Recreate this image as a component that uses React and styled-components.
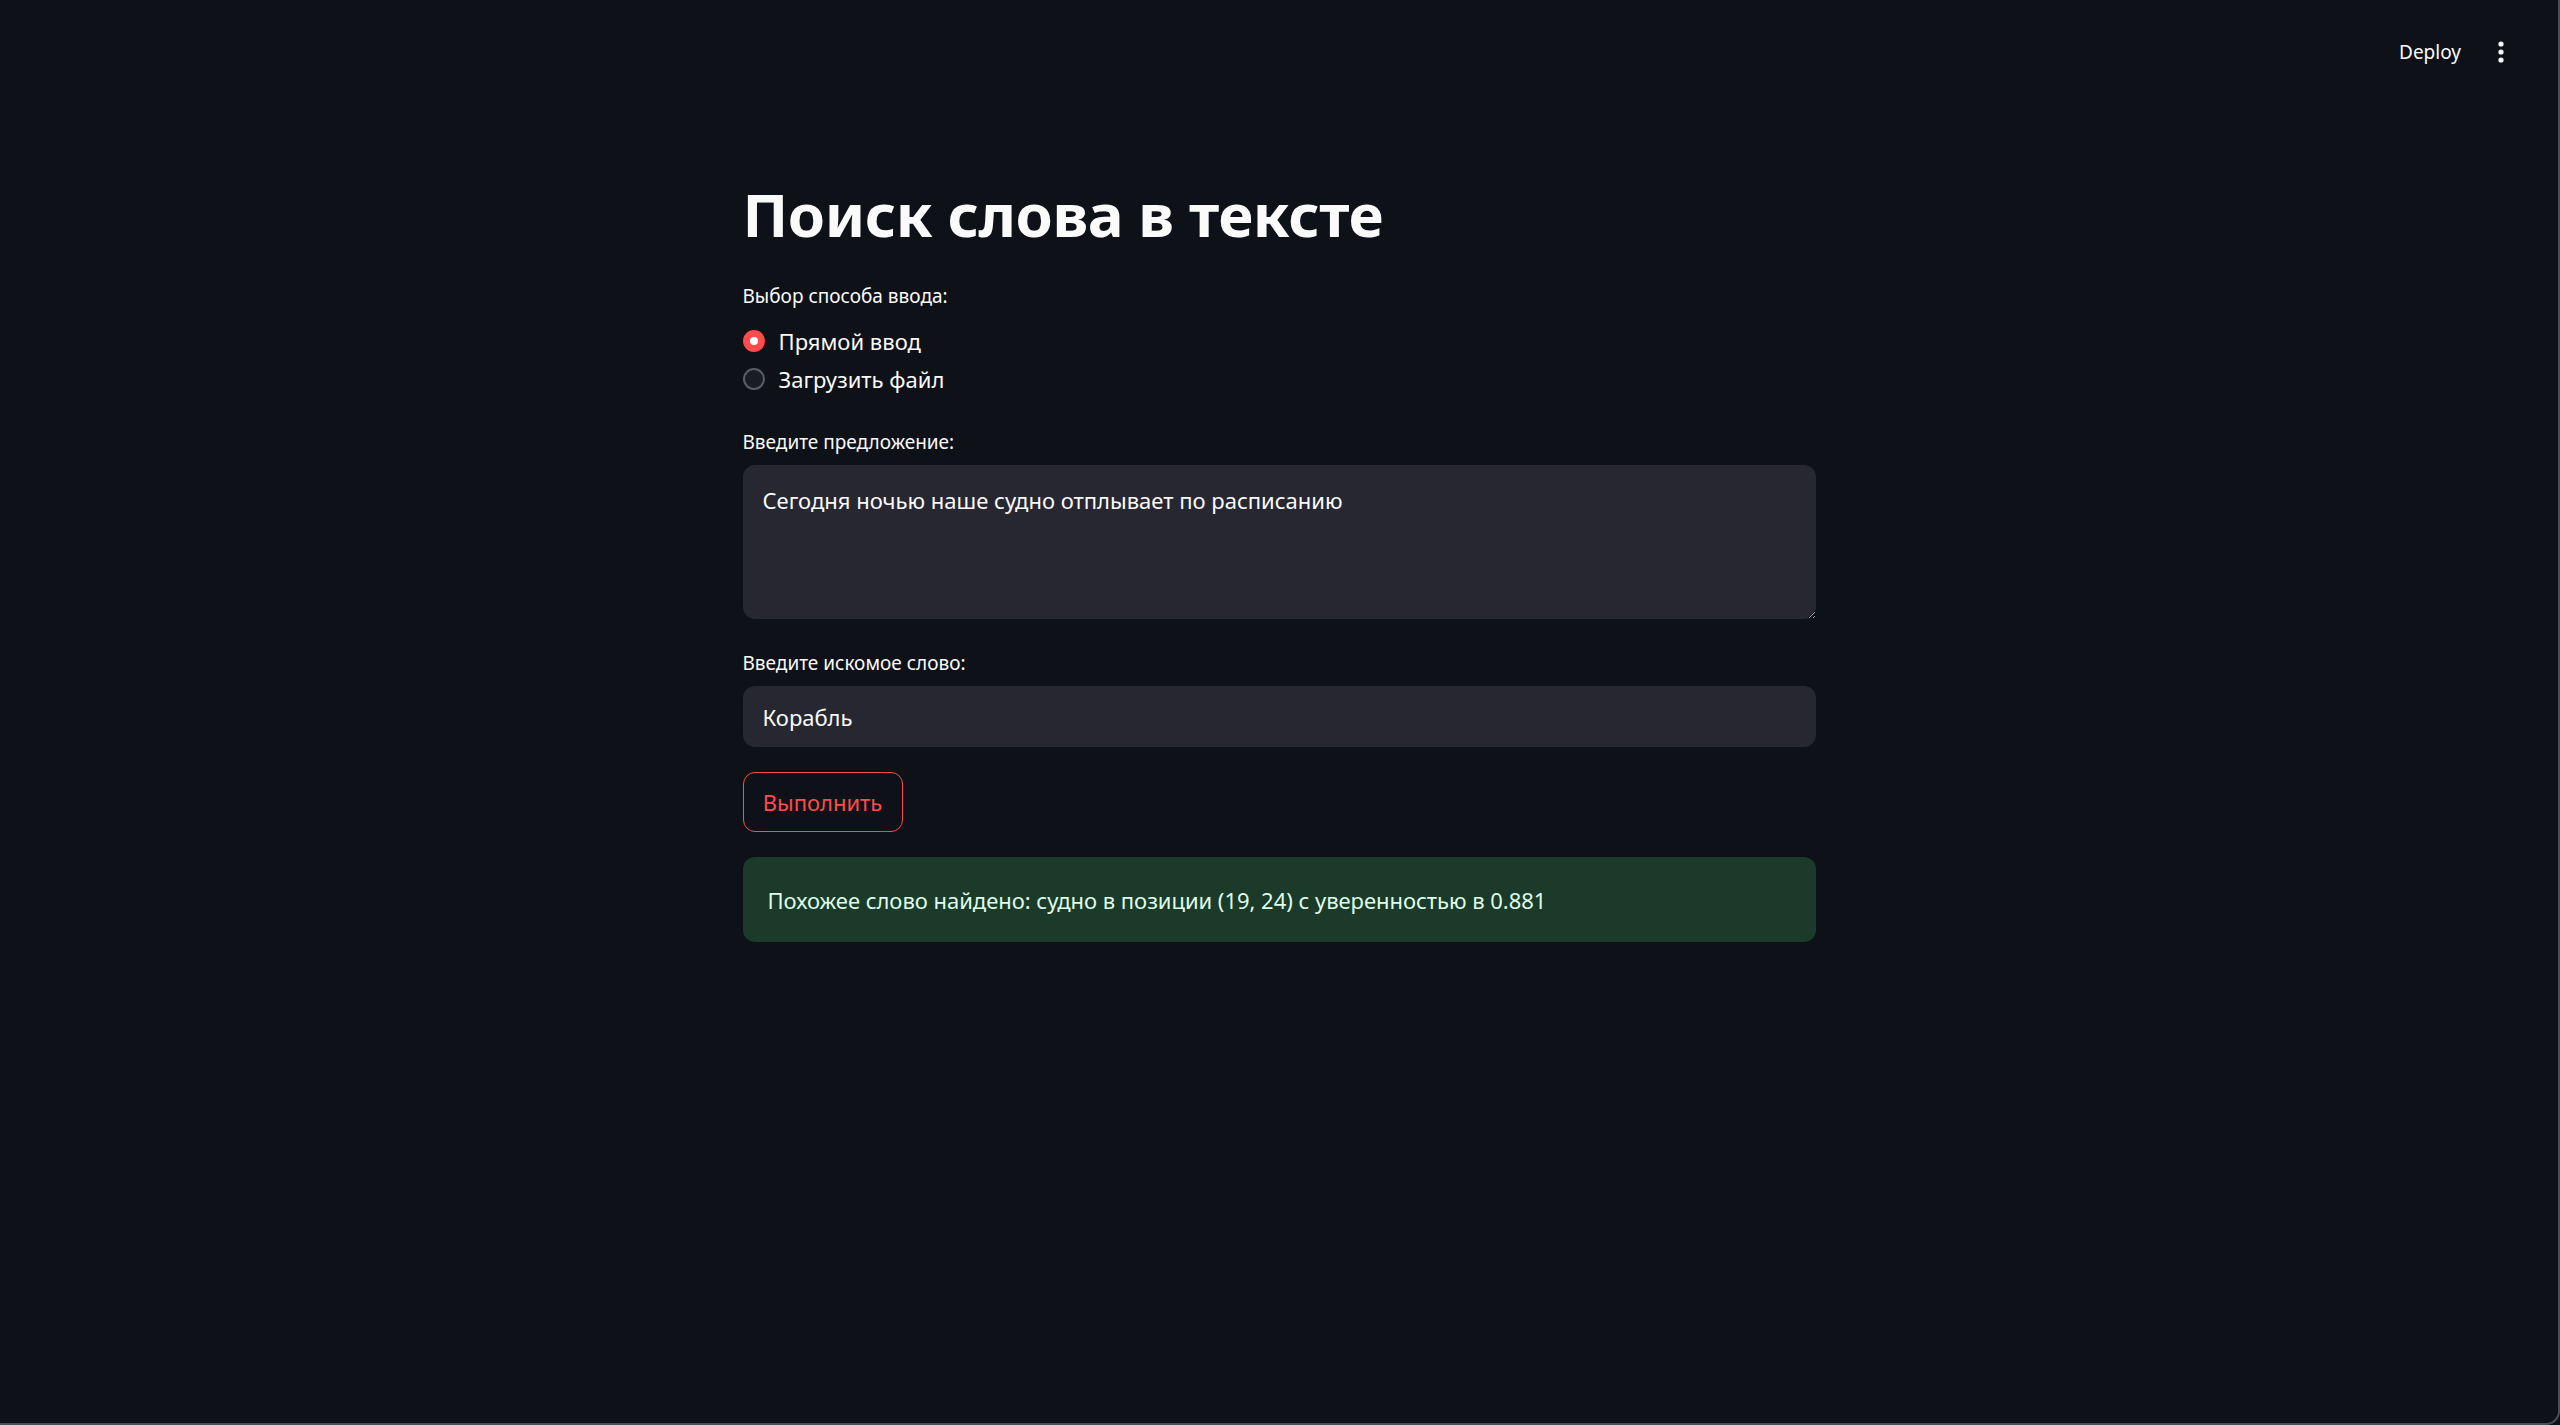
import React from 'react';
import styled, { createGlobalStyle } from 'styled-components';

const colors = {
  bg: '#0e1117',
  text: '#fafafa',
  field: '#262730',
  primary: '#ff4b4b',
  successBg: '#1b3a2a',
  successText: '#dffde9',
  frame: '#4a4d55',
};

const GlobalStyle = createGlobalStyle`
  * { box-sizing: border-box; }
  html, body {
    margin: 0;
    padding: 0;
    background: ${colors.bg};
    color: ${colors.text};
    font-family: "Noto Sans", "Open Sans", sans-serif;
    color-scheme: dark;
  }
`;

const AppFrame = styled.div`
  min-height: 100vh;
  height: 1425px;
  background: ${colors.bg};
  border-right: 2px solid ${colors.frame};
  border-bottom: 2px solid ${colors.frame};
  border-bottom-right-radius: 14px;
  display: flex;
  flex-direction: column;
  overflow: hidden;
`;

const Header = styled.header`
  height: 90px;
  flex-shrink: 0;
  display: flex;
  justify-content: flex-end;
  align-items: flex-start;
  padding: 40px 35px 0 0;
  gap: 28px;
`;

const DeployButton = styled.div`
  font-size: 19px;
  line-height: 40px;
  margin-top: -8px;
  color: ${colors.text};
  cursor: pointer;
`;

const Kebab = styled.div`
  width: 24px;
  height: 24px;
  display: flex;
  align-items: center;
  justify-content: center;
  margin-right: 10px;
`;

const Main = styled.main`
  width: 1073px;
  margin: 0 auto;
  padding-top: 88px;
  display: flex;
  flex-direction: column;
`;

const Title = styled.h1`
  margin: 0;
  font-size: 60px;
  font-weight: 700;
  line-height: 72px;
  letter-spacing: -0.4px;
  color: ${colors.text};
`;

const Label = styled.div`
  font-size: 19px;
  line-height: 28px;
  color: ${colors.text};
  margin-top: ${(p) => p.$top || 30}px;
  margin-bottom: ${(p) => p.$bottom || 9}px;
`;

const RadioGroup = styled.div`
  display: flex;
  flex-direction: column;
`;

const RadioRow = styled.label`
  height: 38px;
  display: flex;
  align-items: center;
  gap: 14px;
  font-size: 22px;
  cursor: pointer;
`;

const RadioDot = styled.span`
  width: 22px;
  height: 22px;
  border-radius: 50%;
  flex-shrink: 0;
  display: flex;
  align-items: center;
  justify-content: center;
  background: ${(p) => (p.$checked ? colors.primary : '#1a1c23')};
  border: ${(p) => (p.$checked ? 'none' : '2px solid #5a5d65')};
  &::after {
    content: '';
    display: ${(p) => (p.$checked ? 'block' : 'none')};
    width: 8px;
    height: 8px;
    border-radius: 50%;
    background: #fff;
  }
`;

const TextArea = styled.textarea`
  width: 100%;
  height: 154px;
  border: none;
  outline: none;
  border-radius: 12px;
  background: ${colors.field};
  color: ${colors.text};
  font-family: inherit;
  font-size: 22px;
  line-height: 35px;
  padding: 18px 20px;
  resize: vertical;
  display: block;
`;

const TextInput = styled.input`
  width: 100%;
  height: 61px;
  border: none;
  outline: none;
  border-radius: 12px;
  background: ${colors.field};
  color: ${colors.text};
  font-family: inherit;
  font-size: 22px;
  padding: 0 20px;
  display: block;
`;

const Button = styled.button`
  align-self: flex-start;
  margin-top: 25px;
  width: 160px;
  height: 60px;
  border-radius: 12px;
  border: 1.5px solid ${colors.primary};
  background: transparent;
  color: ${colors.primary};
  font-family: inherit;
  font-size: 22px;
  cursor: pointer;
`;

const Alert = styled.div`
  margin-top: 25px;
  height: 85px;
  border-radius: 12px;
  background: ${colors.successBg};
  color: ${colors.successText};
  font-size: 22px;
  letter-spacing: -0.03px;
  display: flex;
  align-items: center;
  padding: 0 25px;
`;

const KebabIcon = () => (
  <svg width="6" height="22" viewBox="0 0 6 22">
    <circle cx="3" cy="3" r="2.6" fill={colors.text} />
    <circle cx="3" cy="11" r="2.6" fill={colors.text} />
    <circle cx="3" cy="19" r="2.6" fill={colors.text} />
  </svg>
);

const options = ['Прямой ввод', 'Загрузить файл'];

export default function App() {
  const [mode, setMode] = React.useState(0);
  return (
    <AppFrame>
      <GlobalStyle />
      <Header>
        <DeployButton>Deploy</DeployButton>
        <Kebab>
          <KebabIcon />
        </Kebab>
      </Header>
      <Main>
        <Title>Поиск слова в тексте</Title>
        <Label $top={32} $bottom={12}>Выбор способа ввода:</Label>
        <RadioGroup>
          {options.map((o, i) => (
            <RadioRow key={o} onClick={() => setMode(i)}>
              <RadioDot $checked={mode === i} />
              {o}
            </RadioRow>
          ))}
        </RadioGroup>
        <Label>Введите предложение:</Label>
        <TextArea defaultValue="Сегодня ночью наше судно отплывает по расписанию" />
        <Label>Введите искомое слово:</Label>
        <TextInput defaultValue="Корабль" />
        <Button>Выполнить</Button>
        <Alert>Похожее слово найдено: судно в позиции (19, 24) с уверенностью в 0.881</Alert>
      </Main>
    </AppFrame>
  );
}
